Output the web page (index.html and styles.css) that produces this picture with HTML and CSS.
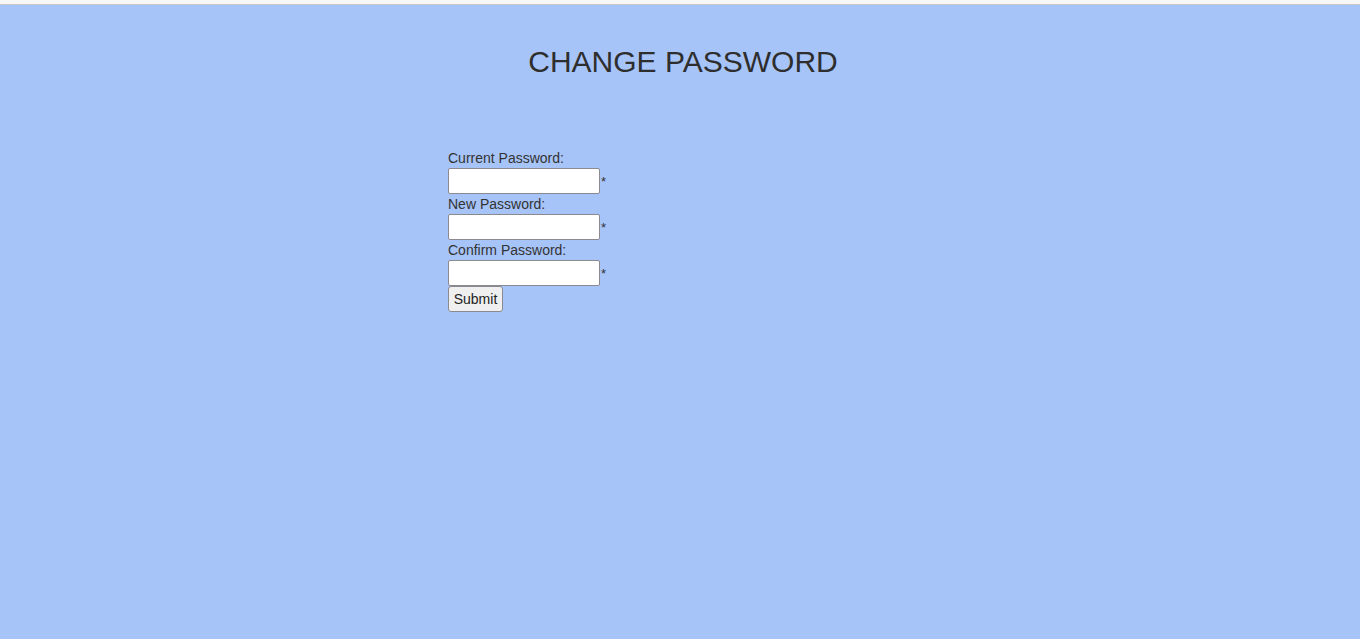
FILE: index.html
```html
<!DOCTYPE html>
<html>
<head>
<meta charset="utf-8">
<title>Change Password</title>
<link rel="stylesheet" href="styles.css">
</head>
<body>
<div class="topbar"></div>
<main class="page">
  <h1 class="title">CHANGE PASSWORD</h1>
  <form class="form">
    <label class="label" for="cur">Current Password:</label>
    <div class="field"><input class="input" id="cur" type="password"><span class="req">*</span></div>
    <label class="label" for="new">New Password:</label>
    <div class="field"><input class="input" id="new" type="password"><span class="req">*</span></div>
    <label class="label" for="conf">Confirm Password:</label>
    <div class="field field-last"><input class="input" id="conf" type="password"><span class="req">*</span></div>
    <button class="submit" type="button">Submit</button>
  </form>
</main>
</body>
</html>
```
FILE: styles.css
```css
html, body {
  margin: 0;
  padding: 0;
  height: 100%;
}
body {
  background: #a7c4f8;
  font-family: "Liberation Sans", Arial, sans-serif;
  color: #333333;
  display: flex;
  flex-direction: column;
}
.topbar {
  height: 4px;
  background: #f7f7f7;
  border-bottom: 1px solid #c6c6c6;
  flex: none;
}
.page {
  flex: 1;
  display: flex;
  flex-direction: column;
}
.title {
  margin: 40px 0 0 0;
  padding-left: 6px;
  font-size: 30px;
  font-weight: normal;
  line-height: 34px;
  text-align: center;
  color: #2e2e2e;
}
.form {
  margin: 71px 0 0 448px;
  display: flex;
  flex-direction: column;
  align-items: flex-start;
}
.label {
  font-size: 14px;
  line-height: 16px;
  height: 16px;
  padding-bottom: 2px;
}
.field {
  display: flex;
  align-items: center;
  margin-bottom: 2px;
}
.field-last {
  margin-bottom: 0;
}
.input {
  box-sizing: border-box;
  width: 152px;
  height: 26px;
  margin: 0;
  border: 1px solid #8a8a90;
  border-radius: 2px;
  background: #ffffff;
  font-size: 14px;
  padding: 2px 4px;
}
.req {
  font-size: 13px;
  line-height: 13px;
  padding-top: 1px;
  margin-left: 1px;
}
.submit {
  box-sizing: border-box;
  height: 26px;
  width: 55px;
  margin: 0;
  padding: 0;
  font-family: "Liberation Sans", Arial, sans-serif;
  font-size: 14px;
  color: #222222;
  background: #efefef;
  border: 1px solid #8a8a90;
  border-radius: 3px;
}
```
